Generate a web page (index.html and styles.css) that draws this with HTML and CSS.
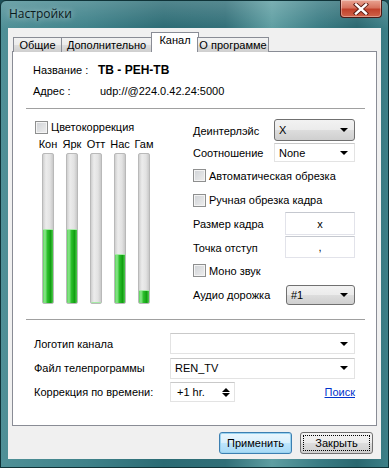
FILE: index.html
```html
<!DOCTYPE html>
<html lang="ru">
<head>
  <meta charset="UTF-8">
  <title>Настройки</title>
  <link rel="stylesheet" href="styles.css">
</head>
<body>
  <div class="window">
    <div class="titlebar">
      <span class="title">Настройки</span>
      <div class="close">
        <svg width="16" height="12" viewBox="0 0 16 12">
          <path d="M3 1.5L13 10.5M13 1.5L3 10.5" stroke="#5a1a12" stroke-width="4.2" stroke-linecap="square"/>
          <path d="M3 1.5L13 10.5M13 1.5L3 10.5" stroke="#fff" stroke-width="2.4" stroke-linecap="square"/>
        </svg>
      </div>
    </div>

    <div class="client">
      <div class="tabs">
        <div class="tab tab-general">Общие</div>
        <div class="tab tab-extra">Дополнительно</div>
        <div class="tab tab-channel active">Канал</div>
        <div class="tab tab-about">О программе</div>
      </div>

      <div class="panel">
        <div class="info">
          <div class="info-row"><span class="info-label">Название :</span><b class="name">ТВ - РЕН-ТВ</b></div>
          <div class="info-row"><span class="info-label">Адрес :</span><span class="addr">udp://@224.0.42.24:5000</span></div>
        </div>

        <div class="sep"></div>

        <div class="middle">
          <div class="color">
            <div class="check color-check"><span class="box"></span>Цветокоррекция</div>
            <div class="bars">
              <div class="bar-col"><span class="bar-label">Кон</span><div class="track"><div class="fill" style="height:50%"></div></div></div>
              <div class="bar-col"><span class="bar-label">Ярк</span><div class="track"><div class="fill" style="height:50%"></div></div></div>
              <div class="bar-col"><span class="bar-label">Отт</span><div class="track"><div class="fill" style="height:0%"></div></div></div>
              <div class="bar-col"><span class="bar-label">Нас</span><div class="track"><div class="fill" style="height:33%"></div></div></div>
              <div class="bar-col"><span class="bar-label">Гам</span><div class="track"><div class="fill" style="height:9%"></div></div></div>
            </div>
          </div>

          <div class="opts">
            <div class="opt row-a">
              <span>Деинтерлэйс</span>
              <div class="combo glass w81"><span>X</span><i class="arrow"></i></div>
            </div>
            <div class="opt row-b">
              <span>Соотношение</span>
              <div class="combo plain w81 h19"><span>None</span><i class="arrow"></i></div>
            </div>
            <div class="opt row-c">
              <div class="check"><span class="box"></span>Автоматическая обрезка</div>
            </div>
            <div class="opt row-d">
              <div class="check"><span class="box"></span>Ручная обрезка кадра</div>
            </div>
            <div class="opt row-e">
              <span>Размер кадра</span>
              <div class="textbox h23">x</div>
            </div>
            <div class="opt row-f">
              <span>Точка отступ</span>
              <div class="textbox h22">,</div>
            </div>
            <div class="opt row-g">
              <div class="check"><span class="box"></span>Моно звук</div>
            </div>
            <div class="opt row-h">
              <span>Аудио дорожка</span>
              <div class="combo glass w69"><span>#1</span><i class="arrow"></i></div>
            </div>
          </div>
        </div>

        <div class="sep sep-low"></div>

        <div class="bottom">
          <div class="field-row row-1">
            <span class="field-label">Логотип канала</span>
            <div class="combo plain wide"><span></span><i class="arrow"></i></div>
          </div>
          <div class="field-row row-2">
            <span class="field-label">Файл телепрограммы</span>
            <div class="combo plain wide"><span>REN_TV</span><i class="arrow"></i></div>
          </div>
          <div class="field-row row-3">
            <span class="field-label">Коррекция по времени:</span>
            <div class="spin"><span>+1 hr.</span><span class="spin-arrows"><i class="up"></i><i class="down"></i></span></div>
            <a class="link" href="#">Поиск</a>
          </div>
        </div>
      </div>

      <div class="buttons">
        <div class="btn default">Применить</div>
        <div class="btn focused"><span class="focus-rect">Закрыть</span></div>
      </div>
    </div>
  </div>
</body>
</html>
```

FILE: styles.css
```css
* {
  box-sizing: border-box;
}

body {
  margin: 0;
  font-family: "Liberation Sans", Arial, sans-serif;
  font-size: 11px;
  color: #000;
  background: #1d5058;
}

.window {
  width: 389px;
  height: 468px;
  display: flex;
  flex-direction: column;
  border: 1px solid #0f3338;
  border-radius: 6px 6px 0 0;
  background:
    linear-gradient(180deg, rgba(255,255,255,0.18) 0, rgba(255,255,255,0) 28px),
    linear-gradient(90deg, #4f9097 0%, #3f828a 22%, #2b6b74 42%, #316f78 58%, #5e9ea2 70%, #3a7c84 82%, #2a6870 92%, #3d8088 100%);
}

/* title bar */
.titlebar {
  height: 27px;
  display: flex;
  padding-left: 8px;
}

.title {
  font-family: "Open Sans", "Noto Sans", sans-serif;
  font-size: 12px;
  line-height: 26px;
  color: #0a1a1c;
  text-shadow: 0 0 6px rgba(255,255,255,0.7);
}

.close {
  margin-left: auto;
  margin-right: 6px;
  margin-top: -1px;
  width: 42px;
  height: 18px;
  display: flex;
  align-items: center;
  justify-content: center;
  border: 1px solid #4a1a16;
  border-top: none;
  border-radius: 0 0 4px 4px;
  background: linear-gradient(180deg, #e9a493 0%, #d7735f 45%, #c1412b 55%, #d0644a 100%);
  box-shadow: inset 0 0 0 1px rgba(255,255,255,0.35);
}

/* client area */
.client {
  flex: 1;
  margin: 0 7px 8px;
  background: #f0f0f0;
  display: flex;
  flex-direction: column;
}

.tabs {
  display: flex;
  padding: 4px 0 0 5px;
  height: 24px;
  margin-bottom: -1px;
  position: relative;
  z-index: 1;
}

.tab {
  flex: none;
  height: 15px;
  margin-top: 5px;
  margin-left: -1px;
  border: 1px solid #898c95;
  border-bottom: none;
  background: linear-gradient(180deg, #f2f2f2 0%, #ebebeb 50%, #dddddd 51%, #cfcfcf 100%);
  display: flex;
  align-items: center;
  justify-content: center;
  white-space: nowrap;
  line-height: 1;
}

.tab-general { width: 49px; margin-left: 0; }
.tab-extra { width: 91px; }
.tab-channel { width: 48px; }
.tab-about { width: 72px; }

.tab.active {
  height: 20px;
  margin-top: 0;
  margin-left: -1px;
  margin-right: -1px;
  background: #fff;
  padding-bottom: 4px;
}

.panel {
  margin-left: 4px;
  width: 365px;
  height: 375px;
  border: 1px solid #898c95;
  background: #fff;
}

.info {
  padding: 7px 0 0 20px;
}

.info-row {
  height: 21px;
  display: flex;
  align-items: center;
}

.info-row + .info-row {
  height: 22px;
}

.info-label {
  width: 65px;
}

.name {
  font-size: 12px;
}

.addr {
  padding-left: 2px;
}

.sep {
  margin: 6px 11px 0 13px;
  border-top: 1px solid #a0a0a0;
}

.sep-low {
  margin-top: 11px;
}

/* middle block */
.middle {
  display: flex;
  padding: 10px 0 0 22px;
}

.color {
  width: 158px;
}

.check {
  display: flex;
  align-items: center;
  gap: 3px;
}

.box {
  width: 13px;
  height: 13px;
  border: 1px solid #8e8f8f;
  background: linear-gradient(135deg, #cfd2d6 0%, #eeeeee 100%);
  box-shadow: inset 0 0 0 1px #f4f4f4;
}

.color-check {
  height: 16px;
}

.bars {
  display: flex;
  margin-left: 1px;
}

.bar-col {
  width: 24px;
  display: flex;
  flex-direction: column;
  align-items: center;
}

.bar-label {
  height: 18px;
  line-height: 18px;
}

.track {
  width: 12px;
  height: 151px;
  border: 1px solid #b9b9b9;
  border-radius: 2px;
  background: linear-gradient(90deg, #cfcfcf 0%, #ececec 30%, #e2e2e2 70%, #c9c9c9 100%);
  display: flex;
  flex-direction: column;
  justify-content: flex-end;
  overflow: hidden;
}

.fill {
  background: linear-gradient(90deg, #5ed45e 0%, #8be78b 20%, #2bbf2b 45%, #139f13 75%, #4ccb4c 100%);
  border-top: 1px solid #a6eba6;
}

.opts {
  width: 162px;
}

.opt {
  display: flex;
  align-items: center;
  justify-content: space-between;
}

.row-a { height: 23px; align-items: flex-start; }
.row-b { height: 21px; }
.row-c { height: 25px; }
.row-d { height: 24px; }
.row-e { height: 24px; align-items: flex-start; }
.row-f { height: 23px; align-items: flex-start; }
.row-g { height: 23px; }
.row-h { height: 26px; }

.row-a > span,
.row-e > span,
.row-f > span {
  align-self: center;
}

.combo {
  height: 22px;
  display: flex;
  align-items: center;
  justify-content: space-between;
  padding: 0 6px 0 4px;
}

.combo.glass {
  border: 1px solid #707070;
  border-radius: 3px;
  background: linear-gradient(180deg, #f2f2f2 0%, #ebebeb 50%, #dddddd 51%, #cfcfcf 100%);
}

.combo.plain {
  border: 1px solid #e3e3e3;
  border-top-color: #c9c9c9;
  background: #fff;
}

.w81 { width: 81px; }
.w69 { width: 69px; height: 20px; }
.h19 { height: 19px; }
.wide { width: 185px; height: 21px; }

.arrow {
  width: 0;
  height: 0;
  border-left: 4px solid transparent;
  border-right: 4px solid transparent;
  border-top: 4px solid #000;
}

.textbox {
  width: 70px;
  border: 1px solid #e2e3ea;
  border-top-color: #c5c8cf;
  background: #fff;
  display: flex;
  align-items: center;
  justify-content: center;
}

.h23 { height: 23px; }
.h22 { height: 22px; }

/* bottom block */
.bottom {
  padding: 11px 21px 0 21px;
}

.field-row {
  display: flex;
  align-items: center;
}

.row-1 { height: 25px; }
.row-2 { height: 24px; }
.row-3 { height: 24px; }

.field-label {
  width: 136px;
}

.spin {
  width: 65px;
  height: 20px;
  border: 1px solid #e3e3e3;
  border-top-color: #c9c9c9;
  background: #fff;
  display: flex;
  align-items: center;
  justify-content: space-between;
  padding: 0 4px 0 6px;
}

.spin-arrows {
  display: flex;
  flex-direction: column;
  gap: 1px;
}

.spin-arrows i {
  width: 0;
  height: 0;
  border-left: 4px solid transparent;
  border-right: 4px solid transparent;
}

.spin-arrows .up { border-bottom: 4px solid #000; }
.spin-arrows .down { border-top: 4px solid #000; }

.link {
  margin-left: auto;
  color: #0033cc;
}

/* dialog buttons */
.buttons {
  display: flex;
  justify-content: flex-end;
  gap: 8px;
  padding: 6px 8px 0 0;
}

.btn {
  width: 73px;
  height: 22px;
  border: 1px solid #707070;
  border-radius: 3px;
  background: linear-gradient(180deg, #f2f2f2 0%, #ebebeb 50%, #dddddd 51%, #cfcfcf 100%);
  display: flex;
  align-items: center;
  justify-content: center;
  padding: 2px;
}

.btn.default {
  border-color: #3c7fb1;
  background: linear-gradient(180deg, #eaf6fd 0%, #d9f0fc 50%, #bee6fd 51%, #a7d9f5 100%);
  box-shadow: inset 0 0 0 1px #9ad3f0;
}

.focus-rect {
  flex: 1;
  align-self: stretch;
  display: flex;
  align-items: center;
  justify-content: center;
  border: 1px dotted #000;
}
```
